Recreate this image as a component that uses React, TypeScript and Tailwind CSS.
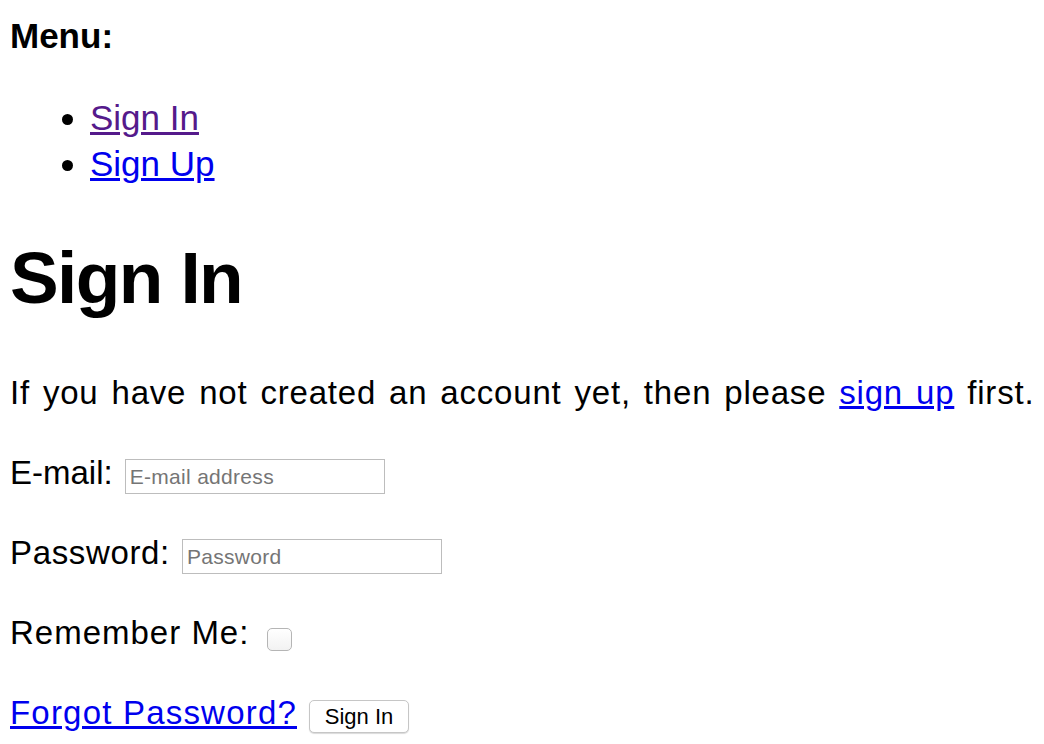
export default function App() {
  return (
    <div className="min-h-[744px] bg-white pl-[10px] text-black" style={{ fontFamily: '"Liberation Sans", Arial, sans-serif' }}>
      <div className="pt-[16px] text-[35px] font-bold leading-[40px]">Menu:</div>
      <ul className="mt-[39px] list-disc pl-[80px] text-[35px] leading-[46px]">
        <li>
          <a href="#" className="text-[#551a8b] underline">Sign In</a>
        </li>
        <li>
          <a href="#" className="text-[#0000ee] underline">Sign Up</a>
        </li>
      </ul>
      <h1 className="mt-[48px] text-[73px] font-bold leading-[86px] tracking-[-1.6px]">Sign In</h1>
      <p className="mt-[48px] text-[33px] leading-[47px] tracking-[0.8px] [word-spacing:3px]">
        If you have not created an account yet, then please{" "}
        <a href="#" className="text-[#0000ee] underline">sign up</a> first.
      </p>
      <div className="mt-[33px] text-[33px] leading-[47px]">
        <span>E-mail:</span>
        <input
          type="text"
          placeholder="E-mail address"
          className="ml-[12px] h-[35px] w-[260px] border border-[#bdbdbd] px-[4px] align-baseline text-[21px] tracking-[0.3px] placeholder:text-[#757575] outline-none"
        />
      </div>
      <div className="mt-[33px] text-[33px] leading-[47px]">
        <span className="tracking-[0.65px]">Password:</span>
        <input
          type="password"
          placeholder="Password"
          className="ml-[12px] h-[35px] w-[260px] border border-[#bdbdbd] px-[4px] align-baseline text-[21px] tracking-[0.3px] placeholder:text-[#757575] outline-none"
        />
      </div>
      <div className="mt-[33px] flex items-center text-[33px] leading-[47px]">
        <span className="tracking-[1px]">Remember Me:</span>
        <span className="ml-[18px] mt-[13px] inline-block h-[23px] w-[25px] rounded-[5px] border border-[#b5b5b5] bg-gradient-to-b from-white to-[#f2f2f2]"></span>
      </div>
      <div className="mt-[33px] text-[33px] leading-[47px]">
        <a href="#" className="text-[#0000ee] underline tracking-[1.2px]">Forgot Password?</a>
        <button className="ml-[12px] h-[33px] w-[100px] rounded-[5px] border border-[#c6c6c6] bg-white align-baseline text-[22px] leading-[31px] text-black shadow-[0_1px_1px_rgba(0,0,0,0.15)]">
          Sign In
        </button>
      </div>
    </div>
  );
}
